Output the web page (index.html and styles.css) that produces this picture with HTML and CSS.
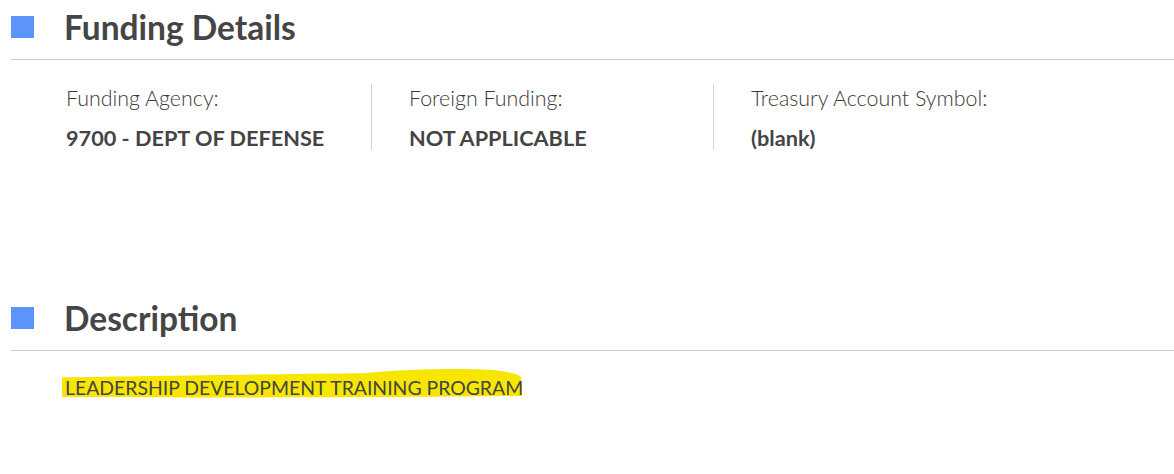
FILE: index.html
```html
<!DOCTYPE html>
<html lang="en">
<head>
<meta charset="utf-8">
<title>Funding Details</title>
<link rel="stylesheet" href="styles.css">
</head>
<body>
<section class="section">
  <div class="head">
    <span class="square"></span>
    <h2 class="title">Funding Details</h2>
  </div>
  <div class="cols">
    <div class="col">
      <div class="label">Funding Agency:</div>
      <div class="value">9700 - DEPT OF DEFENSE</div>
    </div>
    <div class="col col-sep">
      <div class="label">Foreign Funding:</div>
      <div class="value">NOT APPLICABLE</div>
    </div>
    <div class="col col-sep">
      <div class="label">Treasury Account Symbol:</div>
      <div class="value">(blank)</div>
    </div>
  </div>
</section>
<section class="section section-desc">
  <div class="head">
    <span class="square"></span>
    <h2 class="title">Description</h2>
  </div>
  <p class="desc"><span class="mark"><svg class="mark-bg" viewBox="0 0 460 30" preserveAspectRatio="none" aria-hidden="true"><path d="M0 10 C80 9 200 7 300 6 C350 2 400 1 430 3 C450 5 458 8 459 10 L460 28 C400 29 200 30 0 29 Z" fill="#f7e600"/></svg><span class="mark-text">LEADERSHIP DEVELOPMENT TRAINING PROGRAM</span></span></p>
</section>
</body>
</html>
```

FILE: styles.css
```css
* { box-sizing: border-box; }
body {
  margin: 0;
  background: #fff;
  font-family: Lato, "Open Sans", sans-serif;
  color: #444;
}
.section {
  margin-left: 11px;
}
.section-desc {
  margin-top: 141px;
}
.head {
  display: flex;
  align-items: center;
  height: 54px;
  padding-bottom: 5px;
  border-bottom: 1px solid #cfcfcf;
  box-sizing: content-box;
}
.square {
  width: 23px;
  height: 22px;
  background: #5b95f9;
  flex: none;
}
.title {
  margin: 0 0 0 30px;
  font-size: 33.5px;
  font-weight: 700;
  color: #454545;
  line-height: 40px;
}
.cols {
  display: flex;
  margin-top: 24px;
  margin-left: 18px;
}
.col {
  width: 342px;
  height: 66px;
  padding-left: 37px;
}
.col-sep {
  border-left: 1px solid #d4d4d4;
}
.label {
  font-size: 21.4px;
  font-weight: 300;
  line-height: 28px;
  color: #3a3a3a;
}
.value {
  margin-top: 12px;
  font-size: 21.7px;
  font-weight: 700;
  line-height: 28px;
  color: #444;
}
.desc {
  margin: 23px 0 0 54px;
  font-size: 19.4px;
  line-height: 28px;
  color: #444;
}
.mark {
  position: relative;
  display: inline-block;
}
.mark-bg {
  position: absolute;
  left: -3px;
  top: -7px;
  width: calc(100% + 2px);
  height: 31px;
}
.mark-text {
  position: relative;
}
```
